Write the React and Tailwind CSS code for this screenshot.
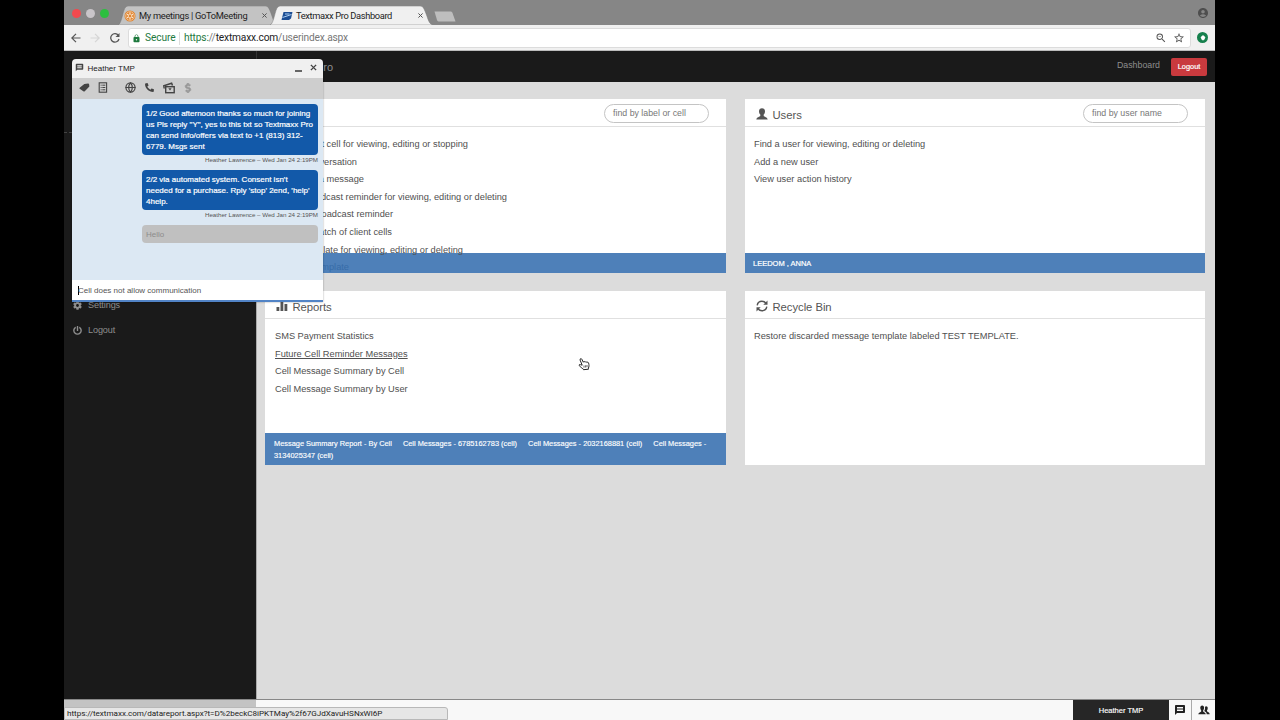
import React from "react";
import { MdMessage, MdAccountCircle, MdOutlineStarBorder, MdOutlineZoomOut, MdLock } from "react-icons/md";
import { FaPhone, FaDollarSign, FaCog, FaPowerOff } from "react-icons/fa";
import { LuGlobe } from "react-icons/lu";

const PersonIcon = ({ className }) => (
  <svg viewBox="0 0 12 12" className={className} fill="currentColor">
    <path d="M6 .3C4.200.3 3 1.500 3 3.300c0 1.400.500 2.600 1.300 3.300v1.300C3.800 8.700.700 8.900.300 11.500h11.400c-.400-2.600-3.500-2.800-4-3.600V6.600C8.500 5.900 9 4.700 9 3.300 9 1.500 7.800.3 6 .3z" />
  </svg>
);

const PeopleIcon = () => (
  <svg viewBox="0 0 13 11" className="h-[10px] w-[12px]" fill="currentColor">
    <path d="M4.500.5C3.200.5 2.400 1.500 2.400 3c0 1.200.400 2.200 1 2.800v1.300C3 7.800.300 8 .200 10.300h8.300C8.300 8 6 7.800 5.600 7.100V5.800c.600-.6 1-1.600 1-2.800 0-1.500-.800-2.500-2.100-2.500z" />
    <path d="M8.800 1.500c1.100 0 1.800.8 1.800 2 0 1-.300 1.800-.8 2.300v1.100c.4.700 2.900.9 3 3.400H9.500C9.400 8.400 8.300 7.500 7 7V5.900c.6-.8.800-2 .6-3.700.3-.5.700-.7 1.200-.7z" />
  </svg>
);

const ChartIcon = () => (
  <svg viewBox="0 0 12 12" className="h-3 w-3 shrink-0" fill="currentColor">
    <rect x="0.500" y="7" width="2.800" height="4" />
    <rect x="4.500" y="1" width="2.800" height="10" />
    <rect x="8.500" y="4" width="2.800" height="7" />
  </svg>
);

const RecycleIcon = () => (
  <svg viewBox="0 0 12 12" className="h-3 w-3 shrink-0" fill="none" stroke="currentColor" strokeWidth="1.400">
    <path d="M1.200 5.300C1.600 2.700 3.700 1.300 6 1.300c1.700 0 3 .7 4 2M10.800 6.700c-.4 2.600-2.500 4-4.800 4-1.700 0-3-.7-4-2" />
    <path d="M11.500.500v4.200H7.300zM.5 11.500V7.300h4.200z" fill="currentColor" stroke="none" />
  </svg>
);

const TagIcon = () => (
  <svg viewBox="0 0 12 10" className="h-[9px] w-[11px]" fill="currentColor">
    <path d="M.600 5.200 5.800 1.200 10 .500c.7 0 1 .3 1.100.9L11.400 4 6.300 9.200c-.5.4-1.200.4-1.600 0L.600 6.400c-.4-.4-.4-.9 0-1.200z" />
  </svg>
);

const NotesIcon = () => (
  <svg viewBox="0 0 10 11" className="h-[11px] w-[10px]" fill="none" stroke="currentColor">
    <rect x="1.200" y=".8" width="7.400" height="9.400" strokeWidth="1.100" />
    <path d="M2.700 3.200h.9M4.300 3.200h3M2.700 5.500h.9M4.300 5.500h3M2.700 7.800h.9M4.300 7.800h3" />
  </svg>
);

const PhotosIcon = () => (
  <svg viewBox="0 0 12 12" className="h-3 w-3" fill="none" stroke="currentColor">
    <path d="M1.200 6.500.8 3.800 8.600 1.300l.9 2.300" strokeWidth="1.500" />
    <rect x="2.700" y="4.700" width="8.500" height="6" strokeWidth="1.400" />
    <path d="M5.300 6.200h3.300L7 8.400z" fill="currentColor" stroke="none" />
  </svg>
);

const HandCursor = () => (
  <svg viewBox="0 0 12 14" className="h-[14px] w-3" fill="#fff" stroke="#222" strokeWidth="1" strokeLinejoin="round">
    <path d="M4.200 8.200 2.100 3.100C1.700 1.700 3.200 1 3.800 2.200l1.500 3c.2-1 1.500-1 1.800 0 .4-.8 1.500-.6 1.800.3.5-.6 1.500-.3 1.700.6.500 2 .6 3.300-.2 5.100l.1 1-5 .5-.3-.8C4 11.300 2.500 9.900 1.200 8.600c-.5-.9.600-1.500 1.300-.9z" />
    <path d="M6 8.500v2.200M7.600 8.300v2.200M9 8v2.200" strokeWidth=".7" />
  </svg>
);

const Tab = ({ active, icon, children }) => (
  <div className={active ? "relative z-10 -ml-[8px] h-[19px] w-[163px]" : "relative h-[19px] w-[160px]"}>
    <svg viewBox="0 0 164 19" preserveAspectRatio="none" className="absolute inset-0 h-full w-full">
      <path d="M0 19C4 18 5 3 8 1c1-1 2-1 3-1h140c2 0 3 1 4 3 4 8 4 15 9 16z" fill={active ? "#f0f0f0" : "#c3c3c3"} stroke="#777" strokeWidth=".5" />
    </svg>
    <div className={active ? "relative flex h-full items-center pl-[11px] pr-[10px] font-[Roboto,sans-serif] text-[9.300px] text-[#222]" : "relative flex h-full items-center pl-[6px] pr-[11px] font-[Roboto,sans-serif] text-[9.300px] text-[#222]"}>
      {icon}
      <span className={active ? "ml-[3px] whitespace-nowrap tracking-[-0.360px]" : "ml-[3px] whitespace-nowrap tracking-[-0.300px]"}>{children}</span>
      <svg viewBox="0 0 6 6" className="ml-auto h-[5px] w-[5px] shrink-0" stroke="#555" strokeWidth="1.200"><path d="M.5.500l5 5M5.500.500l-5 5" /></svg>
    </div>
  </div>
);

const Search = ({ children, className }) => (
  <div className={`flex h-[19px] w-[105px] items-center rounded-full border border-[#c4c4c4] pl-2 pt-px text-[8.800px] tracking-normal text-[#777] ${className}`}>
    {children}
  </div>
);

const Card = ({ icon, title, search, footer, children }) => (
  <section className="flex flex-col bg-white">
    <header className="flex h-[28px] shrink-0 items-center border-b border-[#e0e0e0] pl-[10px] pt-[3px] text-[11.300px] tracking-[-0.050px] text-[#555]">
      <span className="flex w-[17px] items-center justify-center pr-[4px]">{icon}</span>
      <h2 className="ml-[0.500px] whitespace-nowrap pt-[2px]">{title}</h2>
      {search}
    </header>
    <ul className="flex h-0 grow flex-col px-[9px] pt-[9px] text-[9.250px] leading-[17.600px] text-[#505050]">{children}</ul>
    {footer}
  </section>
);

const cellActions = [
  ["t cell for viewing, editing or stopping", "w-[194px]"],
  ["versation", "w-[83px]"],
  ["a message", "w-[90px]"],
  ["dcast reminder for viewing, editing or deleting", "w-[233px]"],
  ["oadcast reminder", "w-[119px]"],
  ["atch of client cells", "w-[118px]"],
  ["late for viewing, editing or deleting", "w-[189px]"],
];

const Bubble = ({ lines }) => (
  <div className="rounded-[4px] bg-[#1259a9] px-1 py-[3.500px] text-[8px] leading-[11px] text-white [-webkit-text-stroke:0.200px_white]">
    {lines.map((line) => <p key={line} className="whitespace-nowrap">{line}</p>)}
  </div>
);

const Stamp = () => (
  <p className="h-[13px] whitespace-nowrap text-right text-[6.200px] leading-[9px] tracking-[-0.010px] text-[#555]">Heather Lawrence – Wed Jan 24 2:19PM</p>
);

const ChatWindow = () => (
  <div className="absolute left-[8px] top-[59px] z-20 flex h-[243px] w-[251px] flex-col overflow-hidden rounded-t-[4px] border-b-2 border-[#5284c6] shadow-[0_0_2px_rgba(0,0,0,0.4)]">
    <div className="flex h-[19px] shrink-0 items-center bg-[#f0f0f0] pl-[3px] pr-[6px] text-[8px] text-[#222]">
      <MdMessage className="h-[9px] w-[9px] -translate-y-px text-[#444]" />
      <span className="ml-[3.500px]">Heather TMP</span>
      <span className="ml-auto mt-[5px] h-[1.500px] w-[7px] bg-[#666]" />
      <svg viewBox="0 0 8 8" className="ml-[8px] mb-[2px] h-[7px] w-[7px]" stroke="#444" strokeWidth="1.600"><path d="M1 1l6 6M7 1L1 7" /></svg>
    </div>
    <div className="flex h-[21px] shrink-0 items-center bg-[#cecece] pb-[2px] pl-[7px] text-[#444]">
      <TagIcon />
      <span className="ml-[8px]"><NotesIcon /></span>
      <LuGlobe className="ml-[17px] h-[11px] w-[11px]" strokeWidth={2.6} />
      <FaPhone className="ml-[9px] h-[9px] w-[9px] -scale-x-100" />
      <span className="ml-[9px]"><PhotosIcon /></span>
      <FaDollarSign className="ml-[8px] h-[10px] w-[10px] text-[#999]" stroke="currentColor" strokeWidth={30} />
    </div>
    <div className="flex grow flex-col bg-[#dce8f3] pl-[70px] pr-[5px] pt-[5px]">
      <Bubble lines={["1/2 Good afternoon thanks so much for joining", "us Pls reply \"Y\", yes to this txt so Textmaxx Pro", "can send info/offers via text to +1 (813) 312-", "6779. Msgs sent"]} />
      <Stamp />
      <div className="h-[2px]" />
      <Bubble lines={["2/2 via automated system. Consent isn't", "needed for a purchase. Rply 'stop' 2end, 'help'", "4help."]} />
      <Stamp />
      <div className="mt-[2px] flex h-[18px] shrink-0 items-center rounded-[4px] bg-[#c0c0c0] px-1 pt-px text-[8px] text-[#8c8c8c]">Hello</div>
    </div>
    <div className="flex h-[20px] shrink-0 items-center bg-white pl-[6px] pt-px text-[8px] text-[#555]">
      <span className="h-[9px] w-px bg-black" />
      <span className="-ml-px">Cell does not allow communication</span>
    </div>
  </div>
);

export default function App() {
  return (
    <div className="flex h-[720px] w-[1280px] justify-center overflow-hidden bg-black font-['Liberation_Sans',Arial,sans-serif]">
      <div className="relative ml-px mr-[2px] flex w-[1151px] flex-col">
        <div className="flex h-[25px] shrink-0 items-end bg-[#868686]">
          <div className="flex h-full w-[54px] items-center gap-[5px] pl-[8px] pt-[2px]">
            <span className="h-[9px] w-[9px] rounded-full bg-[#f2494e]" />
            <span className="h-[9px] w-[9px] rounded-full bg-[#c9c5c9]" />
            <span className="h-[9px] w-[9px] rounded-full bg-[#2cbf3f]" />
          </div>
          <Tab icon={
            <svg viewBox="0 0 12 12" className="h-[12px] w-[12px] shrink-0">
              <circle cx="6" cy="6" r="5.500" fill="#e0842f" />
              <circle cx="6" cy="6" r="4.300" fill="none" stroke="#f3d3b0" strokeWidth=".7" />
              <path d="M6 2.500v7M3 4.200l6 3.600M3 7.800l6-3.600" stroke="#fbe9d4" strokeWidth="1.200" />
              <circle cx="6" cy="6" r="1.200" fill="#e0842f" />
            </svg>
          }>My meetings | GoToMeeting</Tab>
          <Tab active icon={
            <svg viewBox="0 0 12 10" className="h-[10px] w-[12px] shrink-0">
              <path d="M2.500 1h9L10 7.500 8 9H.500z" fill="#1d4e94" />
              <path d="M1.500 6.500 6 5l4.500-1.500M4 3h4.500" stroke="#a9cdf2" strokeWidth="1" />
            </svg>
          }>Textmaxx Pro Dashboard</Tab>
          <svg viewBox="0 0 22 11" className="mb-[3px] ml-px h-[11px] w-[22px]"><path d="M.5.500h16c1 0 1.500.5 2 1.500l3 8.500H5.500C4 10.500 3.500 10 3 9z" fill="#bebebe" /></svg>
          <MdAccountCircle className="mb-[6px] ml-auto mr-[6px] h-[12px] w-[12px] text-[#4e4e4e]" />
        </div>

        <div className="flex h-[26px] shrink-0 items-center border-b border-[#bcbcbc] bg-[#f0f0f0] pl-[7px] pr-[7px]">
          <svg viewBox="0 0 10 10" className="h-[10px] w-[10px]" fill="none" stroke="#555" strokeWidth="1.200"><path d="M9.500 5H1M5 .8.800 5 5 9.200" /></svg>
          <svg viewBox="0 0 10 10" className="ml-[9px] h-[10px] w-[10px]" fill="none" stroke="#d5d5d5" strokeWidth="1.200"><path d="M.5 5H9M5 .8 9.200 5 5 9.200" /></svg>
          <svg viewBox="0 0 10 10" className="ml-[10px] h-[10px] w-[10px]" fill="none" stroke="#555" strokeWidth="1.300"><path d="M8.400 2.500A4.200 4.200 0 1 0 9 6" /><path d="M9.500 0v4H5.500z" fill="#555" stroke="none" /></svg>
          <div className="ml-[8px] flex h-[20px] w-[1063px] items-center rounded-[3px] border border-[#dcdcdc] bg-white pl-[3px] pt-px font-[Roboto,sans-serif] text-[10.200px] text-[#1f7a3f]">
            <MdLock className="h-[9px] w-[9px]" />
            <span className="ml-[4px] w-[31px] whitespace-nowrap tracking-[-0.100px]">Secure</span>
            <span className="ml-[3px] h-[13px] w-px bg-[#ddd]" />
            <span className="ml-[4px] whitespace-nowrap tracking-[-0.170px]">https:<span className="text-[#777]">//</span><span className="text-[#222]">textmaxx.com</span><span className="text-[#777]">/userindex.aspx</span></span>
            <MdOutlineZoomOut className="ml-auto h-[12px] w-[12px] text-[#555]" />
            <MdOutlineStarBorder className="ml-[6px] mr-[5px] h-[12px] w-[12px] text-[#555]" />
          </div>
          <span className="ml-auto flex h-[11px] w-[11px] items-center justify-center rounded-full bg-[#16804d]">
            <svg viewBox="0 0 6 6" className="h-[6px] w-[6px]" fill="#fff"><path d="M3 0 .3 2.800h1.400L3 6l1.300-3.200h1.400z" /><circle cx="3" cy="3" r="2" /></svg>
          </span>
        </div>

        <div className="flex grow">
          <aside className="flex w-[192px] shrink-0 flex-col bg-[#1a1a1a] text-[9.100px] text-[#8e8e8e]">
            <div className="mt-[81px] border-t border-dashed border-[#444]" />
            <div className="mt-[160px] flex h-[25px] items-center pl-[9px]"><FaCog className="h-[9px] w-[9px]" /><span className="ml-[6px] tracking-[-0.100px]">Settings</span></div>
            <div className="flex h-[25px] items-center pl-[9px]"><FaPowerOff className="h-[9px] w-[9px]" /><span className="ml-[6px] tracking-[-0.100px]">Logout</span></div>
          </aside>
          <main className="flex grow flex-col border-l border-[#aaa] bg-[#dcdcdc]">
            <div className="-ml-px flex h-[31px] items-center border-l border-[#333] bg-[#1a1a1a] pr-[8px] text-[#8e8e8e]">
              <span className="w-[76px] whitespace-nowrap pt-px text-right text-[11px]">ro</span>
              <span className="ml-auto pb-[2px] text-[8.800px]">Dashboard</span>
              <span className="ml-[11px] flex h-[18px] w-[36px] items-center justify-center rounded-[2px] bg-[#c93a3e] text-[7.400px] text-white [-webkit-text-stroke:0.200px_white]">Logout</span>
            </div>
            <div className="grid grid-cols-[461px_460px] grid-rows-[174px_174px] gap-x-[19px] gap-y-[18px] pl-[8px] pt-[17px]">
              <Card title="" search={<Search className="-mt-[2px] ml-auto mr-[17px]">find by label or cell</Search>} footer={
                <div className="h-[20px] shrink-0 bg-[#4e80b9] pl-[9px] text-[9.250px] leading-[29px] text-[#376ca8]"><div className="w-[75px] text-right">mplate</div></div>
              }>
                {cellActions.map(([text, width]) => (
                  <li key={text} className={`relative z-[1] flex shrink-0 justify-end whitespace-nowrap ${width}`}><span>{text}</span></li>
                ))}
              </Card>
              <Card icon={<PersonIcon className="h-3 w-3 shrink-0" />} title="Users" search={<Search className="-mt-[2px] ml-auto mr-[17px]">find by user name</Search>} footer={
                <div className="flex h-[20px] shrink-0 items-center bg-[#4e80b9] pl-[8px] pt-px text-[7.500px] text-white [-webkit-text-stroke:0.200px_white]">LEEDOM , ANNA</div>
              }>
                <li>Find a user for viewing, editing or deleting</li>
                <li>Add a new user</li>
                <li>View user action history</li>
              </Card>
              <Card icon={<ChartIcon />} title="Reports" footer={
                <div className="h-[32px] shrink-0 bg-[#4e80b9] pl-[9px] pt-[5px] text-[7.400px] leading-[11.500px] text-white [-webkit-text-stroke:0.150px_white]">
                  <div className="flex gap-[11px] whitespace-nowrap">
                    <span>Message Summary Report - By Cell</span><span>Cell Messages - 6785162783 (cell)</span><span>Cell Messages - 2032168881 (cell)</span><span>Cell Messages -</span>
                  </div>
                  <div>3134025347 (cell)</div>
                </div>
              }>
                <li className="pl-px">SMS Payment Statistics</li>
                <li className="pl-px underline">Future Cell Reminder Messages</li>
                <li className="pl-px">Cell Message Summary by Cell</li>
                <li className="pl-px">Cell Message Summary by User</li>
              </Card>
              <Card icon={<RecycleIcon />} title="Recycle Bin">
                <li>Restore discarded message template labeled TEST TEMPLATE.</li>
              </Card>
            </div>
          </main>
        </div>

        <div className="flex h-[21px] shrink-0 border-t border-[#888] bg-[#f8f8f8]">
          <div className="w-[192px] bg-[#c3c3c3]" />
          <div className="ml-auto flex w-[96px] items-center justify-center bg-[#262626] pt-px text-[7.500px] text-white [-webkit-text-stroke:0.150px_white]">Heather TMP</div>
          <div className="flex w-[23px] items-center justify-center border-r border-[#aaa] text-[#222]"><MdMessage className="h-[12px] w-[12px]" /></div>
          <div className="flex w-[23px] items-center justify-center text-[#222]"><PeopleIcon /></div>
        </div>

        <ChatWindow />
        <div className="absolute left-[514px] top-[357px]"><HandCursor /></div>
        <div className="absolute left-0 top-[707px] flex h-[13px] w-[384px] items-center rounded-tr-[3px] border border-[#b8b8b8] bg-[#e6e6e6] pl-[2px] font-[Roboto,sans-serif] text-[8.100px] tracking-[-0.030px] text-[#222]">https://textmaxx.com/datareport.aspx?t=D%2beckC8iPKTMay%2f67GJdXavuHSNxWl6P</div>
      </div>
    </div>
  );
}
